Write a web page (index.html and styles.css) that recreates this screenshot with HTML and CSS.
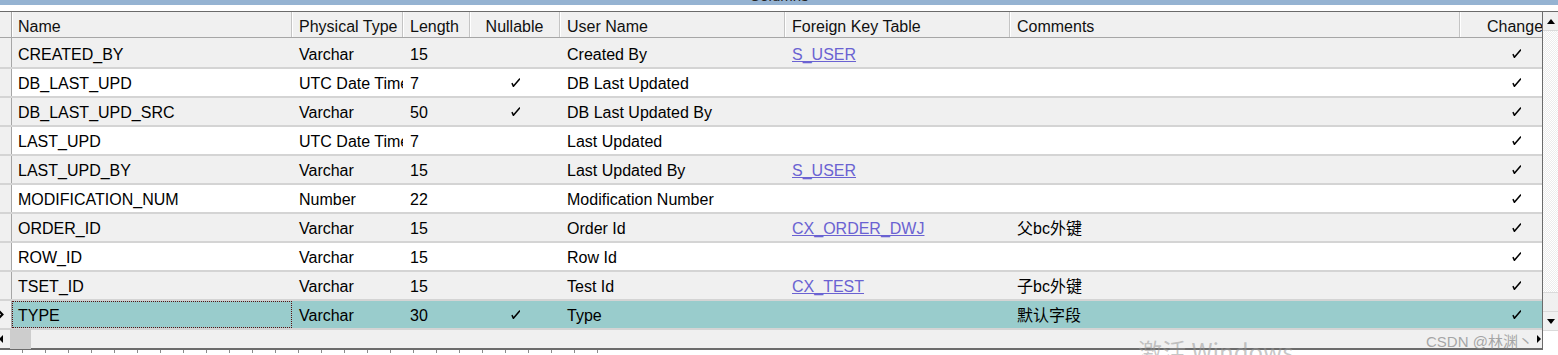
FILE: index.html
```html
<!DOCTYPE html>
<html lang="en">
<head>
    <meta charset="UTF-8">
    <title>Columns</title>
    <link rel="stylesheet" href="styles.css">
</head>
<body>

    <!-- Window title (mostly scrolled off the top) -->
    <div class="titlebar"><span>Columns</span></div>
    <div class="spacer"></div>

    <div class="frame">
        <div class="main">
            <div class="grid">
                <!-- Header -->
                <div class="row head">
                    <div class="sel"></div>
                    <div class="cell name">Name</div>
                    <div class="cell">Physical Type</div>
                    <div class="cell">Length</div>
                    <div class="cell center">Nullable</div>
                    <div class="cell">User Name</div>
                    <div class="cell">Foreign Key Table</div>
                    <div class="cell">Comments</div>
                    <div class="cell changed">Changed</div>
                </div>

                <div class="body">
                    <div class="row alt">
                        <div class="sel"></div>
                        <div class="cell name">CREATED_BY</div>
                        <div class="cell">Varchar</div>
                        <div class="cell">15</div>
                        <div class="cell center"></div>
                        <div class="cell">Created By</div>
                        <div class="cell"><a class="link">S_USER</a></div>
                        <div class="cell"></div>
                        <div class="cell center"><svg class="chk" viewBox="0 0 9 9"><path d="M1.2 5.6 L2.4 8.3 L8.6 1"/></svg></div>
                    </div>
                    <div class="row">
                        <div class="sel"></div>
                        <div class="cell name">DB_LAST_UPD</div>
                        <div class="cell">UTC Date Time</div>
                        <div class="cell">7</div>
                        <div class="cell center"><svg class="chk" viewBox="0 0 9 9"><path d="M1.2 5.6 L2.4 8.3 L8.6 1"/></svg></div>
                        <div class="cell">DB Last Updated</div>
                        <div class="cell"></div>
                        <div class="cell"></div>
                        <div class="cell center"><svg class="chk" viewBox="0 0 9 9"><path d="M1.2 5.6 L2.4 8.3 L8.6 1"/></svg></div>
                    </div>
                    <div class="row alt">
                        <div class="sel"></div>
                        <div class="cell name">DB_LAST_UPD_SRC</div>
                        <div class="cell">Varchar</div>
                        <div class="cell">50</div>
                        <div class="cell center"><svg class="chk" viewBox="0 0 9 9"><path d="M1.2 5.6 L2.4 8.3 L8.6 1"/></svg></div>
                        <div class="cell">DB Last Updated By</div>
                        <div class="cell"></div>
                        <div class="cell"></div>
                        <div class="cell center"><svg class="chk" viewBox="0 0 9 9"><path d="M1.2 5.6 L2.4 8.3 L8.6 1"/></svg></div>
                    </div>
                    <div class="row">
                        <div class="sel"></div>
                        <div class="cell name">LAST_UPD</div>
                        <div class="cell">UTC Date Time</div>
                        <div class="cell">7</div>
                        <div class="cell center"></div>
                        <div class="cell">Last Updated</div>
                        <div class="cell"></div>
                        <div class="cell"></div>
                        <div class="cell center"><svg class="chk" viewBox="0 0 9 9"><path d="M1.2 5.6 L2.4 8.3 L8.6 1"/></svg></div>
                    </div>
                    <div class="row alt">
                        <div class="sel"></div>
                        <div class="cell name">LAST_UPD_BY</div>
                        <div class="cell">Varchar</div>
                        <div class="cell">15</div>
                        <div class="cell center"></div>
                        <div class="cell">Last Updated By</div>
                        <div class="cell"><a class="link">S_USER</a></div>
                        <div class="cell"></div>
                        <div class="cell center"><svg class="chk" viewBox="0 0 9 9"><path d="M1.2 5.6 L2.4 8.3 L8.6 1"/></svg></div>
                    </div>
                    <div class="row">
                        <div class="sel"></div>
                        <div class="cell name">MODIFICATION_NUM</div>
                        <div class="cell">Number</div>
                        <div class="cell">22</div>
                        <div class="cell center"></div>
                        <div class="cell">Modification Number</div>
                        <div class="cell"></div>
                        <div class="cell"></div>
                        <div class="cell center"><svg class="chk" viewBox="0 0 9 9"><path d="M1.2 5.6 L2.4 8.3 L8.6 1"/></svg></div>
                    </div>
                    <div class="row alt">
                        <div class="sel"></div>
                        <div class="cell name">ORDER_ID</div>
                        <div class="cell">Varchar</div>
                        <div class="cell">15</div>
                        <div class="cell center"></div>
                        <div class="cell">Order Id</div>
                        <div class="cell"><a class="link">CX_ORDER_DWJ</a></div>
                        <div class="cell">父bc外键</div>
                        <div class="cell center"><svg class="chk" viewBox="0 0 9 9"><path d="M1.2 5.6 L2.4 8.3 L8.6 1"/></svg></div>
                    </div>
                    <div class="row">
                        <div class="sel"></div>
                        <div class="cell name">ROW_ID</div>
                        <div class="cell">Varchar</div>
                        <div class="cell">15</div>
                        <div class="cell center"></div>
                        <div class="cell">Row Id</div>
                        <div class="cell"></div>
                        <div class="cell"></div>
                        <div class="cell center"><svg class="chk" viewBox="0 0 9 9"><path d="M1.2 5.6 L2.4 8.3 L8.6 1"/></svg></div>
                    </div>
                    <div class="row alt">
                        <div class="sel"></div>
                        <div class="cell name">TSET_ID</div>
                        <div class="cell">Varchar</div>
                        <div class="cell">15</div>
                        <div class="cell center"></div>
                        <div class="cell">Test Id</div>
                        <div class="cell"><a class="link">CX_TEST</a></div>
                        <div class="cell">子bc外键</div>
                        <div class="cell center"><svg class="chk" viewBox="0 0 9 9"><path d="M1.2 5.6 L2.4 8.3 L8.6 1"/></svg></div>
                    </div>
                    <div class="row selected">
                        <div class="sel"><svg class="current" viewBox="0 0 5 9"><polyline points="0,1 3.4,4.5 0,8"/></svg></div>
                        <div class="cell name focus">TYPE</div>
                        <div class="cell">Varchar</div>
                        <div class="cell">30</div>
                        <div class="cell center"><svg class="chk" viewBox="0 0 9 9"><path d="M1.2 5.6 L2.4 8.3 L8.6 1"/></svg></div>
                        <div class="cell">Type</div>
                        <div class="cell"></div>
                        <div class="cell">默认字段</div>
                        <div class="cell center"><svg class="chk" viewBox="0 0 9 9"><path d="M1.2 5.6 L2.4 8.3 L8.6 1"/></svg></div>
                    </div>
                </div>
            </div>

            <!-- Horizontal scroll bar -->
            <div class="hscroll">
                <svg class="harrow left" viewBox="0 0 4 8"><polygon points="4,0 0,4 4,8"/></svg>
                <div class="hthumb"></div>
                <div class="hfill"></div>
                <svg class="harrow right" viewBox="0 0 4 8"><polygon points="0,0 4,4 0,8"/></svg>
            </div>
        </div>

        <!-- Vertical scroll bar -->
        <div class="vscroll">
            <div class="vbtn"><svg viewBox="0 0 8 5"><polygon points="0,5 4,0 8,5"/></svg></div>
            <div class="vtrack"></div>
            <div class="vthumb"></div>
            <div class="vbtn"><svg viewBox="0 0 8 5"><polygon points="0,0 8,0 4,5"/></svg></div>
        </div>
    </div>

    <div class="ruler"></div>

    <!-- Watermarks lying over the page -->
    <div class="wm-windows">激活 Windows</div>
    <div class="wm-csdn">CSDN @林渊丶</div>

</body>
</html>
```

FILE: styles.css
```css
/* Reset */
* {
    box-sizing: border-box;
}

body {
    margin: 0;
    width: 1558px;
    height: 355px;
    overflow: hidden;
    position: relative;
    background: #ffffff;
    color: #000000;
    font-family: "Liberation Sans", Arial, "Noto Sans CJK SC", sans-serif;
    font-size: 16px;
}

/* Title bar */
.titlebar {
    height: 5px;
    background: #95b3d2;
    overflow: hidden;
    text-align: center;
}

.titlebar span {
    display: block;
    font-size: 15px;
    line-height: 15px;
    margin-top: -12px;
    color: #222222;
}

.spacer {
    height: 6px;
}

/* Frame around grid + scroll bars */
.frame {
    display: flex;
    border-top: 1px solid #6b6b6b;
}

.main {
    width: 1543px;
    overflow: hidden;
    border-right: 1px solid #6b6b6b;
}

/* Grid */
.row {
    display: grid;
    grid-template-columns: 12px 280px 111px 67px 90px 225px 225px 450px 112px;
    width: 1572px;
    height: 29px;
    background: #ffffff;
}

.row.alt {
    background: #f0f0f0;
}

.row.selected {
    background: #99cccc;
}

.body .row + .row {
    border-top: 2px solid #d4d4d4;
}

.body {
    border-bottom: 2px solid #d4d4d4;
}

.cell {
    display: flex;
    align-items: center;
    padding-left: 7px;
    padding-top: 4px;
    line-height: 18px;
    white-space: nowrap;
    overflow: hidden;
}

.body .row + .row .cell {
    padding-top: 2px;
}

.cell.name {
    padding-left: 6px;
}

.cell.center {
    justify-content: center;
    padding-left: 0;
}

.cell.focus {
    outline: 1px dotted #5a1010;
    outline-offset: -1px;
}

.sel {
    background: #f0f0f0;
    border-right: 1px solid #a6a6a6;
    display: flex;
    align-items: center;
    overflow: hidden;
}

/* Header */
.row.head {
    height: 26px;
    background: #f0f0f0;
    border-bottom: 1px solid #a6a6a6;
}

.head .cell {
    border-right: 1px solid #c4c4c4;
    box-shadow: inset 1px 0 0 #ffffff;
    color: #101010;
}

.head .cell.changed {
    padding-left: 27px;
}

.link {
    color: #6a62d2;
    text-decoration: underline;
}

.chk {
    width: 9px;
    height: 9px;
    margin-top: -2px;
    fill: none;
    stroke: #000000;
    stroke-width: 1.5;
    stroke-linecap: round;
}

.current {
    width: 5px;
    height: 9px;
    margin-left: -1px;
    fill: none;
    stroke: #000000;
    stroke-width: 2.2;
}

/* Horizontal scroll bar */
.hscroll {
    display: flex;
    align-items: center;
    height: 20px;
    background: #f0f0f0;
    border-bottom: 2px solid #6b6b6b;
}

.harrow {
    width: 4px;
    height: 8px;
    fill: #000000;
}

.harrow.left {
    margin-left: -1px;
}

.hthumb {
    width: 21px;
    height: 20px;
    margin-left: 7px;
    background: #cdcdcd;
}

.hfill {
    flex: 1;
}

.harrow.right {
    margin-right: 1px;
}

/* Vertical scroll bar */
.vscroll {
    width: 15px;
    height: 319px;
    display: flex;
    flex-direction: column;
    background: #ffffff;
}

.vbtn {
    height: 19px;
    background: #f0f0f0;
    display: flex;
    align-items: center;
    justify-content: center;
    border-bottom: 1px solid #dadada;
}

.vbtn svg {
    width: 8px;
    height: 5px;
    fill: #000000;
}

.vtrack {
    flex: 1;
    background-color: #ffffff;
    background-image: repeating-conic-gradient(#ececec 0 25%, #ffffff 0 50%);
    background-size: 2px 2px;
}

.vthumb {
    height: 20px;
    background: #f0f0f0;
    border-top: 1px solid #dadada;
    border-bottom: 1px solid #dadada;
}

/* Ruler ticks under the frame */
.ruler {
    width: 612px;
    height: 3px;
    background-image: repeating-linear-gradient(to right, transparent 0 22px, #8a8a8a 22px 23px);
}

/* Watermarks */
.wm-windows {
    position: absolute;
    left: 1138px;
    top: 333px;
    font-size: 24px;
    color: rgba(150, 150, 150, 0.55);
    font-family: "Noto Sans CJK SC", "Liberation Sans", sans-serif;
    white-space: nowrap;
}

.wm-csdn {
    position: absolute;
    left: 1426px;
    top: 330px;
    font-size: 15px;
    color: rgba(140, 140, 140, 0.75);
    font-family: "Liberation Sans", "Noto Sans CJK SC", sans-serif;
    white-space: nowrap;
}
```
